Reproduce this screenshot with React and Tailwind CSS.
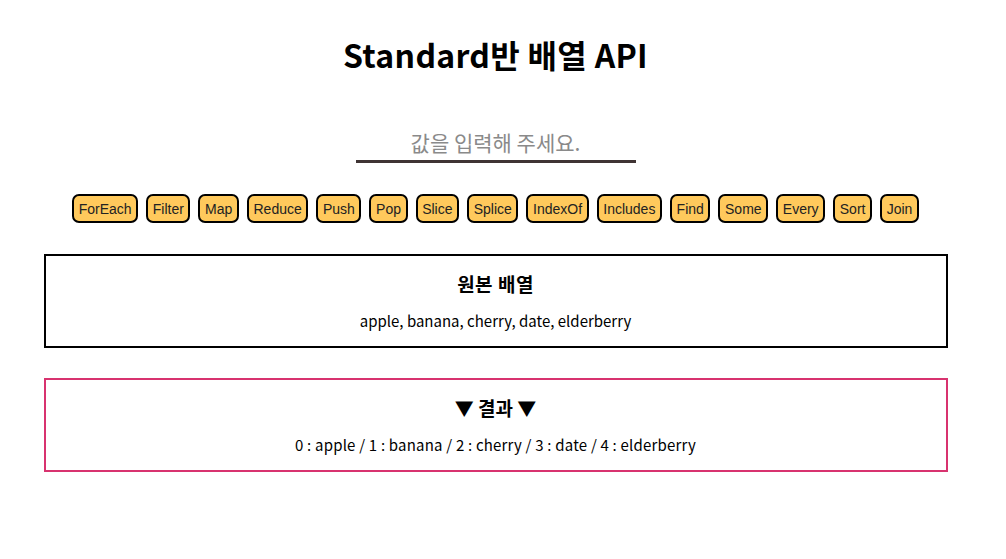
import { useState } from "react";

const fruits = ["apple", "banana", "cherry", "date", "elderberry"];

const methods = [
  "ForEach",
  "Filter",
  "Map",
  "Reduce",
  "Push",
  "Pop",
  "Slice",
  "Splice",
  "IndexOf",
  "Includes",
  "Find",
  "Some",
  "Every",
  "Sort",
  "Join",
];

export default function App() {
  const [value, setValue] = useState("");
  const result = fruits.map((f, i) => `${i} : ${f}`).join(" / ");

  return (
    <div className="w-[991px] bg-white font-['Noto_Sans_CJK_KR','Noto_Sans',sans-serif] text-black">
      <h1 className="pt-[33px] text-center text-[32px] font-bold leading-[42px] tracking-[0.3px]">
        Standard반 배열 API
      </h1>

      <div className="mt-[53px] flex justify-center">
        <input
          value={value}
          onChange={(e) => setValue(e.target.value)}
          placeholder="값을 입력해 주세요."
          className="w-[280px] border-b-[3px] border-[#3f3434] pb-[4px] text-center text-[21px] leading-[28px] outline-none placeholder:text-[#8a8a8a]"
        />
      </div>

      <div className="mt-[31px] flex justify-center gap-[8px]">
        {methods.map((m) => (
          <button
            key={m}
            className="h-[29px] rounded-[7px] border-2 border-black bg-[#ffc95c] px-[4.6px] font-['Liberation_Sans',Arial,sans-serif] text-[14px] leading-[16px] text-[#222]"
          >
            {m}
          </button>
        ))}
      </div>

      <div className="mx-auto mt-[31px] flex h-[94px] w-[904px] flex-col items-center border-2 border-black pt-[14px]">
        <h2 className="text-[19px] font-bold leading-[28px] tracking-[0.5px]">원본 배열</h2>
        <p className="mt-[13px] text-[15px] leading-[20px]">{fruits.join(", ")}</p>
      </div>

      <div className="mx-auto mt-[30px] flex h-[94px] w-[904px] flex-col items-center border-2 border-[#d8336f] pt-[14px]">
        <h2 className="text-[19px] font-bold leading-[28px]">▼ 결과 ▼</h2>
        <p className="mt-[13px] text-[15px] leading-[20px] tracking-[0.2px]">{result}</p>
      </div>
      <div className="h-[88px]" />
    </div>
  );
}
